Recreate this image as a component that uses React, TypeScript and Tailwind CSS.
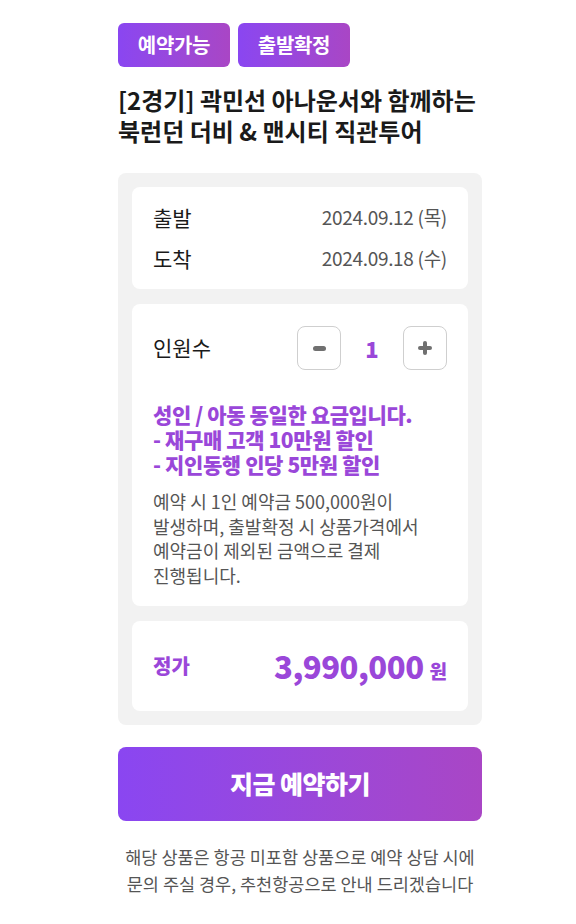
const font = { fontFamily: '"Noto Sans CJK KR", "Noto Sans", sans-serif' };

function Stepper() {
  return (
    <div className="flex items-center">
      <button className="flex h-[44px] w-[44px] items-center justify-center rounded-lg border border-[#cfcfcf] bg-white">
        <span className="block h-[5px] w-[13px] rounded-sm bg-[#707070]" />
      </button>
      <span className="w-[62px] text-center text-[22px] font-black text-[#9a47d9]">1</span>
      <button className="relative flex h-[44px] w-[44px] items-center justify-center rounded-lg border border-[#cfcfcf] bg-white">
        <span className="absolute block h-[4px] w-[14px] rounded-sm bg-[#707070]" />
        <span className="absolute block h-[14px] w-[4px] rounded-sm bg-[#707070]" />
      </button>
    </div>
  );
}

export default function App() {
  return (
    <div className="min-h-[924px] bg-white" style={font}>
      <div className="ml-[118px] w-[364px] pt-[23px] pb-10">
        <div className="flex gap-2">
          {['예약가능', '출발확정'].map((b) => (
            <span
              key={b}
              className="flex h-[44px] w-[112px] items-center justify-center rounded-md bg-gradient-to-r from-[#8a46f1] to-[#a946c5] text-[20px] font-bold tracking-[-0.3px] text-white"
            >
              {b}
            </span>
          ))}
        </div>

        <h1 className="mt-[17px] text-[24px] font-semibold leading-[31px] text-[#1a1a1a]">
          [2경기] 곽민선 아나운서와 함께하는
          <br />
          북런던 더비 &amp; 맨시티 직관투어
        </h1>

        <div className="mt-[27px] flex flex-col gap-[15px] rounded-lg bg-[#f2f2f2] p-[14px]">
          <div className="flex flex-col gap-[10px] rounded-lg bg-white px-[21px] py-[15px]">
            <div className="flex h-[31px] items-center justify-between">
              <span className="text-[21px] text-[#1a1a1a]">출발</span>
              <span className="text-[19px] tracking-[-0.3px] text-[#555]">2024.09.12 (목)</span>
            </div>
            <div className="flex h-[31px] items-center justify-between">
              <span className="text-[21px] text-[#1a1a1a]">도착</span>
              <span className="text-[19px] tracking-[-0.3px] text-[#555]">2024.09.18 (수)</span>
            </div>
          </div>

          <div className="rounded-lg bg-white px-[21px] pt-[22px] pb-[19px]">
            <div className="flex items-center justify-between">
              <span className="text-[21px] text-[#1a1a1a]">인원수</span>
              <Stepper />
            </div>
            <p className="mt-[32px] text-[21px] font-black leading-[25px] tracking-[-0.4px] text-[#9a47d9]">
              성인 / 아동 동일한 요금입니다.
              <br />- 재구매 고객 10만원 할인
              <br />- 지인동행 인당 5만원 할인
            </p>
            <p className="mt-[12px] text-[18px] leading-[24.5px] text-[#555]">
              예약 시 1인 예약금 500,000원이
              <br />
              발생하며, 출발확정 시 상품가격에서
              <br />
              예약금이 제외된 금액으로 결제
              <br />
              진행됩니다.
            </p>
          </div>

          <div className="flex h-[90px] items-center justify-between rounded-lg bg-white px-[21px]">
            <span className="text-[20px] font-black text-[#9a47d9]">정가</span>
            <span className="flex items-baseline gap-[6px] text-[#9a47d9]">
              <span className="text-[31px] font-black tracking-[-0.5px]">3,990,000</span>
              <span className="text-[19px] font-black">원</span>
            </span>
          </div>
        </div>

        <button className="mt-[22px] flex h-[74px] w-full items-center justify-center rounded-lg bg-gradient-to-r from-[#8a46f1] to-[#a946c5] text-[25px] font-black tracking-[-0.5px] text-white">
          지금 예약하기
        </button>

        <p className="mt-[22px] text-center text-[17.5px] leading-[27px] text-[#555]">
          해당 상품은 항공 미포함 상품으로 예약 상담 시에
          <br />
          문의 주실 경우, 추천항공으로 안내 드리겠습니다
        </p>
      </div>
    </div>
  );
}
